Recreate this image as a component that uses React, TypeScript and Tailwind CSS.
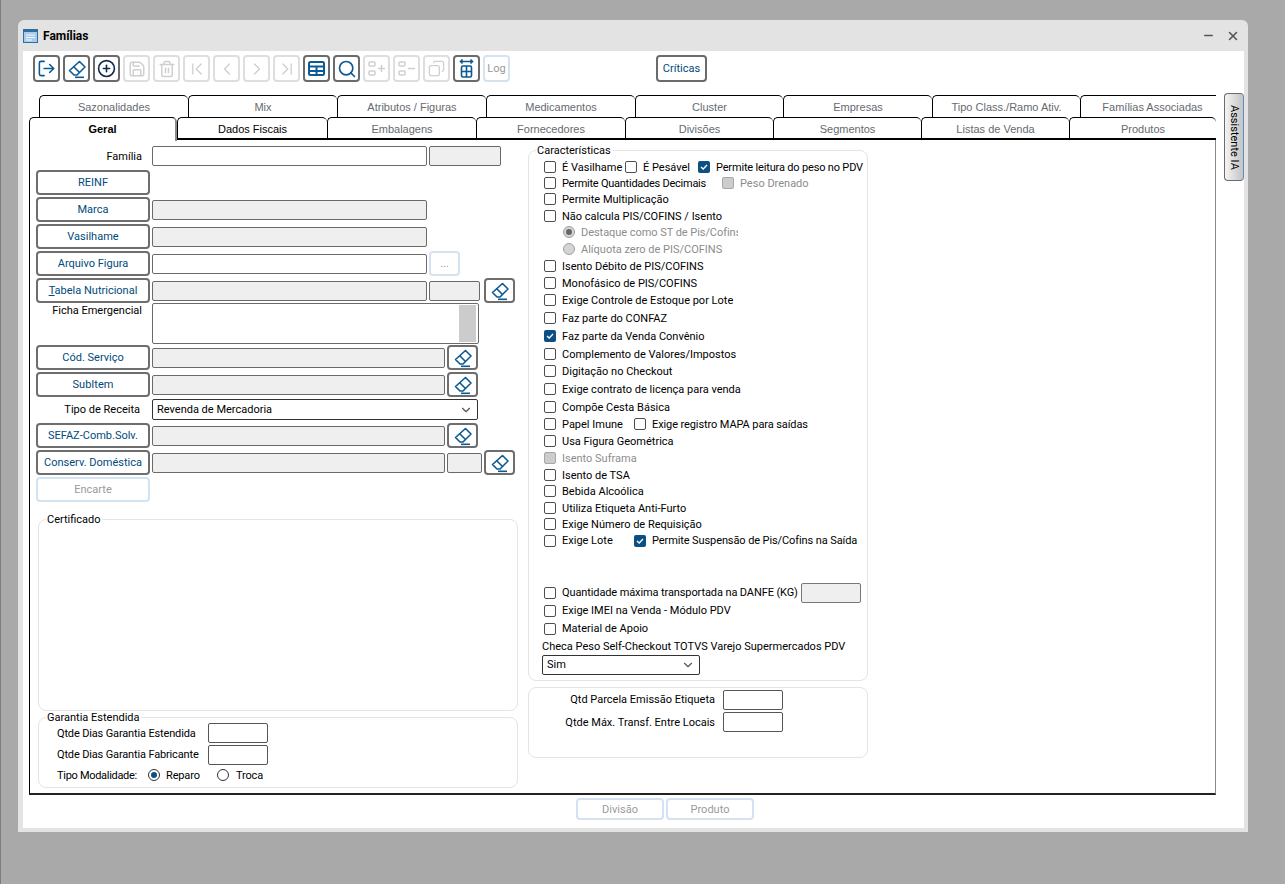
import { ChevronDown, ChevronFirst, ChevronLast, ChevronLeft, ChevronRight, CirclePlus, Copy, LogOut, Minus, Save, Search, Trash2, X } from "lucide-react";
import type { ReactNode } from "react";

const backTabs = [
  { label: "Sazonalidades", w: "w-[149px]" },
  { label: "Mix", w: "w-[149px]" },
  { label: "Atributos / Figuras", w: "w-[149px]" },
  { label: "Medicamentos", w: "w-[149px]" },
  { label: "Cluster", w: "w-[148px]" },
  { label: "Empresas", w: "w-[149px]" },
  { label: "Tipo Class./Ramo Ativ.", w: "w-[148px]" },
  { label: "Famílias Associadas", w: "w-[144px]" },
];

const frontTabs = [
  { label: "Dados Fiscais", w: "w-[150px]", dark: true },
  { label: "Embalagens", w: "w-[149px]" },
  { label: "Fornecedores", w: "w-[149px]" },
  { label: "Divisões", w: "w-[148px]" },
  { label: "Segmentos", w: "w-[148px]" },
  { label: "Listas de Venda", w: "w-[148px]" },
  { label: "Produtos", w: "w-[147px]" },
];

function Eraser({ color = "#0b5a94" }: { color?: string }) {
  return (
    <svg width="20" height="20" viewBox="0 0 20 20" fill="none" stroke={color} strokeWidth="1.6" strokeLinejoin="round">
      <path d="M12.5 2.5 L18 8 L10 16 L7 16 L2.5 11.5 Z" />
      <path d="M6.5 7.5 L12.5 13.5" />
      <path d="M8 18.3 H17" />
    </svg>
  );
}

function TableIcon() {
  return (
    <svg width="19" height="19" viewBox="0 0 19 19" fill="none" stroke="#0b5a94" strokeWidth="2">
      <rect x="2" y="3" width="15" height="13" rx="1.5" />
      <path d="M2 7.5 H17 M2 12 H17 M9.5 7.5 V16" />
    </svg>
  );
}

function ListAdjust({ plus }: { plus?: boolean }) {
  return (
    <svg width="21" height="21" viewBox="0 0 21 21" fill="none" stroke="#cfcfcf" strokeWidth="1.5">
      <rect x="3" y="4" width="6" height="4" rx="1" />
      <rect x="3" y="13" width="6" height="4" rx="1" />
      {plus ? <path d="M12 10.5 H19 M15.5 7 V14" /> : <path d="M12 10.5 H19" />}
    </svg>
  );
}

function ColumnsIcon() {
  return (
    <svg width="17" height="21" viewBox="0 0 17 21" fill="none" stroke="#0b5a94" strokeWidth="1.6">
      <path d="M2.5 3.5 H14.5 M4.5 1.5 L2.5 3.5 L4.5 5.5 M12.5 1.5 L14.5 3.5 L12.5 5.5" />
      <rect x="3.5" y="8" width="10" height="11" rx="1.5" />
      <path d="M3.5 13.5 H13.5 M8.5 8 V19" />
    </svg>
  );
}

function ToolBtn({ on, children }: { on?: boolean; children: ReactNode }) {
  return (
    <button
      className={`w-[27px] h-[27px] rounded-[4px] border-2 flex items-center justify-center shrink-0 ${
        on ? "border-[#6b6b6b]" : "border-[#dedede]"
      }`}
    >
      {children}
    </button>
  );
}

function FormBtn({ children, off }: { children: ReactNode; off?: boolean }) {
  return (
    <button
      className={`w-[114px] h-[25px] pt-px rounded-[4px] border-2 text-center shrink-0 ${
        off ? "border-[#d3e3f1] text-[#9a9a9a]" : "border-[#6e6e6e] text-[#004a7c]"
      }`}
    >
      {children}
    </button>
  );
}

function EraserBtn() {
  return (
    <button className="w-[31px] h-[25px] rounded-[4px] border-2 border-[#6e6e6e] flex items-center justify-center shrink-0">
      <Eraser />
    </button>
  );
}

function Field({ w, off }: { w: string; off?: boolean }) {
  return <div className={`${w} h-5 border border-[#6a6a6a] rounded-[2px] shrink-0 ${off ? "bg-[#efefef]" : "bg-white"}`} />;
}

function Check({ on, off }: { on?: boolean; off?: boolean }) {
  if (on) {
    return (
      <span className="w-3 h-3 mt-0.5 rounded-[2px] bg-[#0b4f84] flex items-center justify-center shrink-0">
        <svg width="8" height="8" viewBox="0 0 8 8" fill="none" stroke="white" strokeWidth="1.3">
          <path d="M1 4 L3.2 6 L7 2" />
        </svg>
      </span>
    );
  }
  return (
    <span
      className={`w-3 h-3 mt-0.5 rounded-[2px] border shrink-0 ${
        off ? "bg-[#cccccc] border-[#a8a8a8]" : "bg-white border-[#4f4f4f]"
      }`}
    />
  );
}

function Radio({ on, off }: { on?: boolean; off?: boolean }) {
  return (
    <span
      className={`w-3 h-3 mt-0.5 rounded-full border flex items-center justify-center shrink-0 ${
        off ? "bg-[#d4d4d4] border-[#a0a0a0]" : "bg-white border-[#333333]"
      }`}
    >
      {on && <span className={`w-1.5 h-1.5 rounded-full ${off ? "bg-[#666666]" : "bg-[#0b4f84]"}`} />}
    </span>
  );
}

function CheckRow({ label, h, on, off, tight }: { label: string; h: string; on?: boolean; off?: boolean; tight?: boolean }) {
  return (
    <div className={`flex items-start gap-1.5 pl-[15px] ${h} ${tight ? "leading-4" : ""}`}>
      <Check on={on} off={off} />
      <span className={off ? "text-[#8c8c8c]" : ""}>{label}</span>
    </div>
  );
}

function Group({ title, className, children }: { title: string; className: string; children: ReactNode }) {
  return (
    <fieldset className={`min-w-0 border border-[#e4e4e4] rounded-lg ${className}`}>
      <legend className="ml-[7px] px-px h-4 leading-[18px]">{title}</legend>
      {children}
    </fieldset>
  );
}

export default function App() {
  return (
    <div className="w-[1285px] h-[884px] bg-[#a9a9a9] border-l border-[#7d7d7d] pt-5 pl-[17px] overflow-hidden font-['Roboto',sans-serif] text-[11px] leading-[18px] text-black">
      <div className="w-[1230px] h-[812px] bg-[#e3e3e3] rounded-t-[6px] flex flex-col">
        {/* Title bar */}
        <div className="h-[31px] flex items-center pl-[5px] pr-2 shrink-0">
          <svg width="15" height="14" viewBox="0 0 15 14">
            <rect x="0.5" y="0.5" width="14" height="13" fill="#a9cbec" stroke="#2f6ea5" />
            <rect x="1" y="1" width="13" height="2" fill="#2f6ea5" />
            <path d="M3 6 H12 M3 8.5 H12 M3 11 H9" stroke="#f2f7fc" />
          </svg>
          <span className="ml-[5px] text-[12px] font-bold">Famílias</span>
          <Minus size={13} strokeWidth={2.6} className="ml-auto text-[#555555]" />
          <X size={14} strokeWidth={2.6} className="ml-[11px] text-[#555555]" />
        </div>

        {/* Window body */}
        <div className="mx-[5px] w-[1221px] h-[777px] bg-white flex flex-col">
          {/* Toolbar */}
          <div className="flex items-center gap-[3px] pl-[10px] pt-1 h-[31px] shrink-0">
            <ToolBtn on><LogOut size={19} strokeWidth={2} className="text-[#0b5a94]" /></ToolBtn>
            <ToolBtn on><Eraser /></ToolBtn>
            <ToolBtn on><CirclePlus size={19} strokeWidth={2} className="text-[#12294d]" /></ToolBtn>
            <ToolBtn><Save size={18} strokeWidth={2} className="text-[#cfcfcf]" /></ToolBtn>
            <ToolBtn><Trash2 size={18} strokeWidth={2} className="text-[#cfcfcf]" /></ToolBtn>
            <ToolBtn><ChevronFirst size={20} strokeWidth={1.6} className="text-[#cfcfcf]" /></ToolBtn>
            <ToolBtn><ChevronLeft size={20} strokeWidth={1.6} className="text-[#cfcfcf]" /></ToolBtn>
            <ToolBtn><ChevronRight size={20} strokeWidth={1.6} className="text-[#cfcfcf]" /></ToolBtn>
            <ToolBtn><ChevronLast size={20} strokeWidth={1.6} className="text-[#cfcfcf]" /></ToolBtn>
            <ToolBtn on><TableIcon /></ToolBtn>
            <ToolBtn on><Search size={20} strokeWidth={2} className="text-[#0b5a94]" /></ToolBtn>
            <ToolBtn><ListAdjust plus /></ToolBtn>
            <ToolBtn><ListAdjust /></ToolBtn>
            <ToolBtn><Copy size={17} strokeWidth={1.8} className="text-[#cfcfcf] -scale-x-100" /></ToolBtn>
            <ToolBtn on><ColumnsIcon /></ToolBtn>
            <button className="w-[27px] h-[27px] pt-px rounded-[4px] border-2 border-[#d3e3f1] text-[#9a9a9a] shrink-0">Log</button>
            <button className="ml-[143px] w-[51px] h-[27px] pt-px rounded-[4px] border-2 border-[#6b6b6b] text-[#004a7c] shrink-0">Críticas</button>
          </div>

          {/* Tabs + side tab */}
          <div className="flex mt-[13px] ml-[6px]">
            <div className="w-[1187px] shrink-0">
              <div className="flex h-[22px] pl-[10px] overflow-hidden font-['Liberation_Sans',sans-serif] text-[11px] text-[#666a70]">
                {backTabs.map((t) => (
                  <div key={t.label} className={`${t.w} shrink-0 border-l border-t border-black rounded-t-[5px] flex items-center justify-center`}>
                    {t.label}
                  </div>
                ))}
              </div>
              <div className="flex h-[23px] font-['Liberation_Sans',sans-serif] text-[11px] text-[#666a70]">
                <div className="w-[148px] h-[24px] pb-0.5 shrink-0 bg-white border-l border-t border-r-2 border-black border-r-[#8a8a8a] rounded-t-[5px] flex items-center justify-center font-bold text-black z-10">
                  Geral
                </div>
                {frontTabs.map((t) => (
                  <div
                    key={t.label}
                    className={`${t.w} shrink-0 pt-px border-l border-t border-b-2 border-black rounded-t-[5px] flex items-center justify-center ${
                      t.dark ? "text-black" : ""
                    }`}
                  >
                    {t.label}
                  </div>
                ))}
              </div>

              {/* Panel */}
              <div className="h-[655px] border-l border-black border-r border-r-[#8a8a8a] border-b-2 border-b-[#222222] flex">
                {/* Left column */}
                <div className="w-[482px] ml-[6px] shrink-0 pt-1.5 flex flex-col">
                  <div className="flex h-5 gap-0.5">
                    <div className="w-[106px] text-right leading-[22px] shrink-0">Família</div>
                    <div className="w-1.5 shrink-0" />
                    <Field w="w-[275px]" />
                    <Field w="w-[72px]" off />
                  </div>
                  <div className="mt-1 h-[25px] mb-0.5"><FormBtn>REINF</FormBtn></div>
                  <div className="flex items-center gap-0.5 h-[25px] mb-0.5">
                    <FormBtn>Marca</FormBtn>
                    <Field w="w-[275px]" off />
                  </div>
                  <div className="flex items-center gap-0.5 h-[25px] mb-0.5">
                    <FormBtn>Vasilhame</FormBtn>
                    <Field w="w-[275px]" off />
                  </div>
                  <div className="flex items-center gap-0.5 h-[25px] mb-0.5">
                    <FormBtn>Arquivo Figura</FormBtn>
                    <Field w="w-[275px]" />
                    <button className="w-[31px] h-[25px] pt-px rounded-[4px] border-2 border-[#d3e3f1] text-[#9a9a9a] shrink-0">...</button>
                  </div>
                  <div className="flex items-center gap-0.5 h-[25px]">
                    <FormBtn><span className="underline">T</span>abela Nutricional</FormBtn>
                    <Field w="w-[275px]" off />
                    <Field w="w-[51px]" off />
                    <div className="w-0 shrink-0" />
                    <EraserBtn />
                  </div>
                  <div className="flex gap-0.5 h-[41px] mb-px">
                    <div className="w-[106px] text-right -mt-px shrink-0">Ficha Emergencial</div>
                    <div className="w-1.5 shrink-0" />
                    <div className="w-[327px] h-[41px] border border-[#6a6a6a] rounded-[2px] flex justify-end p-px pr-0.5">
                      <div className="w-[17px] h-full bg-[#cccccc]" />
                    </div>
                  </div>
                  <div className="flex items-center gap-0.5 h-[25px] mb-0.5">
                    <FormBtn>Cód. Serviço</FormBtn>
                    <Field w="w-[293px]" off />
                    <EraserBtn />
                  </div>
                  <div className="flex items-center gap-0.5 h-[25px] mb-0.5">
                    <FormBtn>SubItem</FormBtn>
                    <Field w="w-[293px]" off />
                    <EraserBtn />
                  </div>
                  <div className="flex items-center gap-0.5 h-[21px] mb-[3px]">
                    <div className="w-[104px] text-right shrink-0">Tipo de Receita</div>
                    <div className="w-2 shrink-0" />
                    <div className="w-[326px] h-[21px] border border-[#333333] rounded-[2px] flex items-center justify-between pl-[4px] pr-1">
                      <span className="pt-px">Revenda de Mercadoria</span>
                      <ChevronDown size={14} strokeWidth={2} className="text-[#555555]" />
                    </div>
                  </div>
                  <div className="flex items-center gap-0.5 h-[25px] mb-0.5">
                    <FormBtn>SEFAZ-Comb.Solv.</FormBtn>
                    <Field w="w-[293px]" off />
                    <EraserBtn />
                  </div>
                  <div className="flex items-center gap-0.5 h-[25px] mb-0.5">
                    <FormBtn>Conserv. Doméstica</FormBtn>
                    <Field w="w-[293px]" off />
                    <Field w="w-[35px]" off />
                    <EraserBtn />
                  </div>
                  <div className="h-[25px]"><FormBtn off>Encarte</FormBtn></div>

                  <Group title="Certificado" className="ml-0.5 mt-[9px] w-[480px] h-[200px] shrink-0">
                    <div />
                  </Group>
                  <Group title="Garantia Estendida" className="ml-0.5 -mt-0.5 w-[480px] h-[79px] shrink-0">
                    <div className="pl-[18px] -mt-[2px] flex flex-col tracking-[-0.15px]">
                      <div className="flex items-center h-5 mb-0.5">
                        <span className="w-[151px] shrink-0 whitespace-nowrap pt-0.5">Qtde Dias Garantia Estendida</span>
                        <div className="w-[60px] h-5 border border-[#555555] rounded-[2px]" />
                      </div>
                      <div className="flex items-center h-5">
                        <span className="w-[151px] shrink-0 whitespace-nowrap -mt-px">Qtde Dias Garantia Fabricante</span>
                        <div className="w-[60px] h-5 border border-[#555555] rounded-[2px]" />
                      </div>
                      <div className="flex items-start mt-[2px]">
                        <span className="w-[91px] shrink-0 whitespace-nowrap tracking-[-0.3px]">Tipo Modalidade:</span>
                        <Radio on />
                        <span className="ml-1.5 w-[51px] shrink-0">Reparo</span>
                        <Radio />
                        <span className="ml-[7px]">Troca</span>
                      </div>
                    </div>
                  </Group>
                </div>

                {/* Right column */}
                <div className="ml-[10px] w-[340px] shrink-0 pt-0.5 flex flex-col">
                  <Group title="Características" className="h-[539px] shrink-0">
                    <div className="pt-px flex flex-col">
                      <div className="flex items-start h-4 pl-[15px]">
                        <Check />
                        <span className="ml-1.5 w-[63px] shrink-0 whitespace-nowrap">É Vasilhame</span>
                        <Check />
                        <span className="ml-1.5 w-[55px] shrink-0 whitespace-nowrap">É Pesável</span>
                        <Check on />
                        <span className="ml-1.5 whitespace-nowrap tracking-[-0.17px]">Permite leitura do peso no PDV</span>
                      </div>
                      <div className="flex items-start h-4 pl-[15px]">
                        <Check />
                        <span className="ml-1.5 w-[160px] shrink-0 whitespace-nowrap tracking-[-0.25px]">Permite Quantidades Decimais</span>
                        <Check off />
                        <span className="ml-1.5 text-[#8c8c8c]">Peso Drenado</span>
                      </div>
                      <CheckRow h="h-[17px]" label="Permite Multiplicação" />
                      <CheckRow h="h-4" label="Não calcula PIS/COFINS / Isento" />
                      <div className="flex items-start h-[17px] pl-[34px] text-[#8c8c8c]">
                        <Radio on off />
                        <span className="ml-1.5 w-[157px] overflow-hidden whitespace-nowrap tracking-[-0.05px]">Destaque como ST de Pis/Cofins</span>
                      </div>
                      <div className="flex items-start h-[17px] pl-[34px] text-[#8c8c8c]">
                        <Radio off />
                        <span className="ml-1.5">Alíquota zero de PIS/COFINS</span>
                      </div>
                      <CheckRow h="h-[17px]" label="Isento Débito de PIS/COFINS" />
                      <CheckRow h="h-[17px]" label="Monofásico de PIS/COFINS" />
                      <CheckRow h="h-[18px]" label="Exige Controle de Estoque por Lote" />
                      <CheckRow h="h-[18px]" label="Faz parte do CONFAZ" />
                      <CheckRow h="h-[18px]" on label="Faz parte da Venda Convênio" />
                      <CheckRow h="h-[17px]" label="Complemento de Valores/Impostos" />
                      <CheckRow h="h-[18px]" label="Digitação no Checkout" />
                      <CheckRow h="h-[18px]" label="Exige contrato de licença para venda" />
                      <CheckRow h="h-[17px]" label="Compõe Cesta Básica" />
                      <div className="flex items-start h-[17px] pl-[15px]">
                        <Check />
                        <span className="ml-1.5 w-[72px] shrink-0">Papel Imune</span>
                        <Check />
                        <span className="ml-1.5 tracking-[-0.1px]">Exige registro MAPA para saídas</span>
                      </div>
                      <CheckRow h="h-[17px]" label="Usa Figura Geométrica" />
                      <CheckRow h="h-[17px]" off label="Isento Suframa" />
                      <CheckRow h="h-4" label="Isento de TSA" />
                      <CheckRow h="h-[17px]" label="Bebida Alcoólica" />
                      <CheckRow h="h-4" label="Utiliza Etiqueta Anti-Furto" />
                      <CheckRow h="h-[17px]" label="Exige Número de Requisição" />
                      <div className="flex items-start h-[52px] pl-[15px] leading-4">
                        <Check />
                        <span className="ml-1.5 w-[72px] shrink-0">Exige Lote</span>
                        <Check on />
                        <span className="ml-1.5 tracking-[-0.1px]">Permite Suspensão de Pis/Cofins na Saída</span>
                      </div>
                      <div className="flex items-start h-[18px] pl-[15px] leading-4">
                        <Check />
                        <span className="ml-1.5 whitespace-nowrap w-[239px] shrink-0 tracking-[-0.11px]">Quantidade máxima transportada na DANFE (KG)</span>
                        <div className="w-[60px] h-5 -mt-[2px] bg-[#efefef] border border-[#777777] rounded-[2px]" />
                      </div>
                      <CheckRow tight h="h-[18px]" label="Exige IMEI na Venda - Módulo PDV" />
                      <CheckRow tight h="h-[18px]" label="Material de Apoio" />
                      <div className="h-4 pl-[13px] whitespace-nowrap leading-4">Checa Peso Self-Checkout TOTVS Varejo Supermercados PDV</div>
                      <div className="ml-[13px] w-[158px] h-[20px] border border-[#333333] rounded-[2px] flex items-center justify-between pl-1 pr-1">
                        <span>Sim</span>
                        <ChevronDown size={14} strokeWidth={2} className="text-[#555555]" />
                      </div>
                    </div>
                  </Group>
                  <div className="mt-1.5 h-[71px] border border-[#e4e4e4] rounded-lg pt-0.5 flex flex-col gap-0.5 shrink-0">
                    <div className="flex items-center h-5">
                      <span className="w-[186px] text-right shrink-0">Qtd Parcela Emissão Etiqueta</span>
                      <div className="ml-2 w-[60px] h-5 border border-[#555555] rounded-[2px]" />
                    </div>
                    <div className="flex items-center h-5">
                      <span className="w-[186px] text-right shrink-0 pt-0.5">Qtde Máx. Transf. Entre Locais</span>
                      <div className="ml-2 w-[60px] h-5 border border-[#555555] rounded-[2px]" />
                    </div>
                  </div>
                </div>
              </div>
            </div>

            <div className="ml-2 -mt-0.5 w-5 h-[88px] rounded-[4px] border border-[#6b6b6b] border-r-[#5a8fc0] bg-linear-to-r from-[#f4f4f4] to-[#c4c4c4] flex items-center justify-center [writing-mode:vertical-rl] text-black">
              Assistente IA
            </div>
          </div>

          {/* Bottom actions */}
          <div className="flex gap-0.5 mt-[3px] ml-[553px]">
            <button className="w-[88px] h-[22px] pt-px rounded-[4px] border-2 border-[#d3e3f1] text-[#9a9a9a]">Divisão</button>
            <button className="w-[88px] h-[22px] pt-px rounded-[4px] border-2 border-[#d3e3f1] text-[#9a9a9a]">Produto</button>
          </div>
        </div>
      </div>
    </div>
  );
}
